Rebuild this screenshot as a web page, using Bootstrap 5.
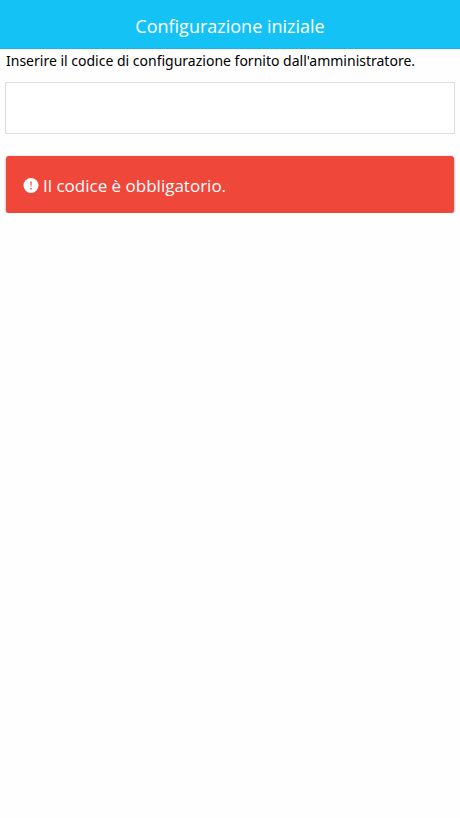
<!DOCTYPE html>
<html lang="it">
<head>
<meta charset="utf-8">
<meta name="viewport" content="width=device-width, initial-scale=1">
<title>Configurazione iniziale</title>
<link href="https://cdn.jsdelivr.net/npm/bootstrap@5.3.0/dist/css/bootstrap.min.css" rel="stylesheet">
<style>
body { font-family: "Open Sans", "Noto Sans", sans-serif; color: #000; background: #fefefe; }
.topbar { background: #14c2f6; padding: 14px 8px 10px; border-bottom: 1px solid #22b2e2; }
.topbar h1 { font-size: 18px; line-height: 24px; font-weight: 400; }
.page-body { padding: 0 5px; }
.code-label { font-family: "Noto Sans", sans-serif; font-size: 14px; line-height: 24px; padding-left: 1px; margin-bottom: 9px; }
.code-input { height: 52px; border: 1px solid #ddd; border-radius: 0; }
.error-box { background: #f0473b; font-size: 17px; line-height: 24px; padding: 18px 17px 15px; border-radius: 3px; margin: 22px 1px 0; box-shadow: 0 1px 3px rgba(0,0,0,.4); }
</style>
</head>
<body>
<header class="topbar text-center text-white"><h1 class="m-0">Configurazione iniziale</h1></header>
<main class="page-body">
<label for="code" class="code-label d-block">Inserire il codice di configurazione fornito dall'amministratore.</label>
<input id="code" type="text" class="code-input form-control">
<div class="error-box d-flex align-items-center text-white" role="alert">
<svg class="me-1 flex-shrink-0" width="16" height="16" viewBox="0 0 16 16" aria-hidden="true"><circle cx="8" cy="7.500" r="7.500" fill="#fff"/><path d="M7.300 3.500h1.400l-.3 5h-.8z M7.300 10h1.400v1.400H7.300z" fill="#f0473b"/></svg>
<span>Il codice è obbligatorio.</span>
</div>
</main>
<script src="https://cdn.jsdelivr.net/npm/bootstrap@5.3.0/dist/js/bootstrap.bundle.min.js"></script>
</body>
</html>
